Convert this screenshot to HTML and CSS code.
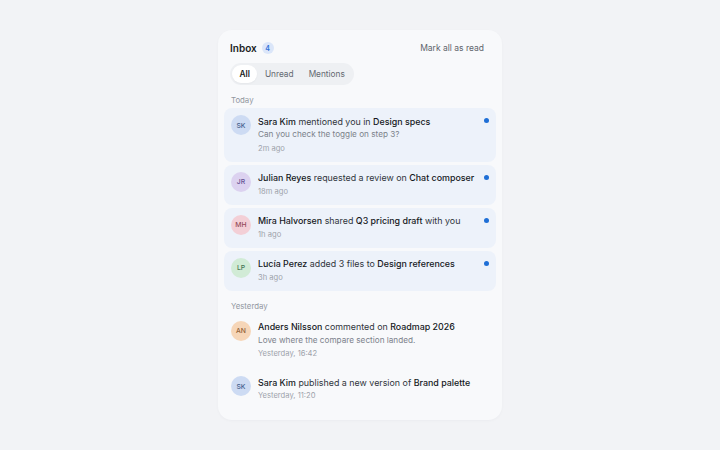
FILE: index.html
```html
<!DOCTYPE html>
<html>
<head>
<meta charset="utf-8">
<link rel="stylesheet" href="styles.css">
</head>
<body>
<div class="card">
  <div class="header">
    <div class="title">Inbox <span class="badge">4</span></div>
    <div class="mark">Mark all as read</div>
  </div>
  <div class="tabs">
    <span class="tab active">All</span>
    <span class="tab">Unread</span>
    <span class="tab">Mentions</span>
  </div>
  <div class="label">Today</div>
  <div class="list">
    <div class="row unread">
      <div class="avatar sk">SK</div>
      <div class="body">
        <div class="line"><b>Sara Kim</b> mentioned you in <b>Design specs</b></div>
        <div class="sub">Can you check the toggle on step 3?</div>
        <div class="time">2m ago</div>
      </div>
      <span class="dot"></span>
    </div>
    <div class="row unread">
      <div class="avatar jr">JR</div>
      <div class="body">
        <div class="line"><b>Julian Reyes</b> requested a review on <b>Chat composer</b></div>
        <div class="time">18m ago</div>
      </div>
      <span class="dot"></span>
    </div>
    <div class="row unread">
      <div class="avatar mh">MH</div>
      <div class="body">
        <div class="line"><b>Mira Halvorsen</b> shared <b>Q3 pricing draft</b> with you</div>
        <div class="time">1h ago</div>
      </div>
      <span class="dot"></span>
    </div>
    <div class="row unread">
      <div class="avatar lp">LP</div>
      <div class="body">
        <div class="line"><b>Lucía Perez</b> added 3 files to <b>Design references</b></div>
        <div class="time">3h ago</div>
      </div>
      <span class="dot"></span>
    </div>
  </div>
  <div class="label second">Yesterday</div>
  <div class="list read">
    <div class="row">
      <div class="avatar an">AN</div>
      <div class="body">
        <div class="line"><b>Anders Nilsson</b> commented on <b>Roadmap 2026</b></div>
        <div class="sub">Love where the compare section landed.</div>
        <div class="time">Yesterday, 16:42</div>
      </div>
    </div>
    <div class="row">
      <div class="avatar sk">SK</div>
      <div class="body">
        <div class="line"><b>Sara Kim</b> published a new version of <b>Brand palette</b></div>
        <div class="time">Yesterday, 11:20</div>
      </div>
    </div>
  </div>
</div>
</body>
</html>
```
FILE: styles.css
```css
html, body {
  margin: 0;
  padding: 0;
}
body {
  background: #f2f3f6;
  font-family: Inter, "Noto Sans", sans-serif;
  width: 720px;
  height: 450px;
  overflow: hidden;
}
.card {
  box-sizing: border-box;
  width: 284px;
  height: 390px;
  margin: 30px auto 0;
  background: #f8f9fb;
  border-radius: 14px;
  padding: 10px 6px 6px;
  box-shadow: 0 1px 3px rgba(20, 30, 50, 0.03);
}
.header {
  display: flex;
  align-items: center;
  justify-content: space-between;
  padding: 0 12px 0 6px;
  height: 16px;
}
.title {
  font-size: 10px;
  font-weight: 600;
  color: #1a1d22;
  display: flex;
  align-items: center;
  gap: 5px;
}
.badge {
  display: inline-flex;
  align-items: center;
  justify-content: center;
  width: 12px;
  height: 12px;
  border-radius: 50%;
  background: #dbe6f9;
  color: #2f6fd8;
  font-size: 7px;
  font-weight: 600;
}
.mark {
  font-size: 8.5px;
  color: #5f646c;
}
.tabs {
  display: inline-flex;
  margin: 7px 0 0 6px;
  padding: 2px;
  background: #eef0f3;
  border-radius: 11px;
}
.tab {
  font-size: 8.3px;
  color: #646971;
  padding: 0 7.5px;
  height: 18px;
  line-height: 18px;
  border-radius: 9px;
}
.tab.active {
  background: #ffffff;
  color: #1a1d22;
  font-weight: 600;
  box-shadow: 0 1px 2px rgba(0, 0, 0, 0.04);
}
.label {
  font-size: 7.8px;
  color: #92979f;
  padding: 0 7px;
  height: 14px;
  line-height: 14px;
  margin-top: 8px;
  margin-bottom: 1px;
}
.label.second {
  margin-top: 8px;
}
.list {
  display: flex;
  flex-direction: column;
  gap: 3px;
}
.list.read {
  gap: 2px;
}
.row {
  display: flex;
  align-items: flex-start;
  padding: 6.5px 8px 6.5px 7px;
  border-radius: 8px;
  position: relative;
}
.row.unread {
  background: #edf2fa;
}
.avatar {
  flex: none;
  width: 20px;
  height: 20px;
  border-radius: 50%;
  font-size: 6.8px;
  font-weight: 500;
  display: flex;
  align-items: center;
  justify-content: center;
  margin-top: 0.5px;
  margin-right: 7px;
}
.avatar.sk { background: #cddbf3; color: #45628f; }
.avatar.jr { background: #dcd2f0; color: #655393; }
.avatar.mh { background: #f3cfd6; color: #944b5a; }
.avatar.lp { background: #d1ebd6; color: #477655; }
.avatar.an { background: #f6d6b8; color: #926036; }
.body {
  flex: 1;
  min-width: 0;
}
.line {
  font-size: 8.9px;
  line-height: 13.5px;
  color: #30353c;
  white-space: nowrap;
}
.line b {
  font-weight: 500;
  color: #15181c;
}
.sub {
  font-size: 8.2px;
  line-height: 13.5px;
  color: #7c828b;
}
.time {
  font-size: 7.6px;
  line-height: 13.5px;
  color: #9ea3ab;
}
.dot {
  position: absolute;
  right: 7px;
  top: 10px;
  width: 5px;
  height: 5px;
  border-radius: 50%;
  background: #1f6fd6;
}
```
